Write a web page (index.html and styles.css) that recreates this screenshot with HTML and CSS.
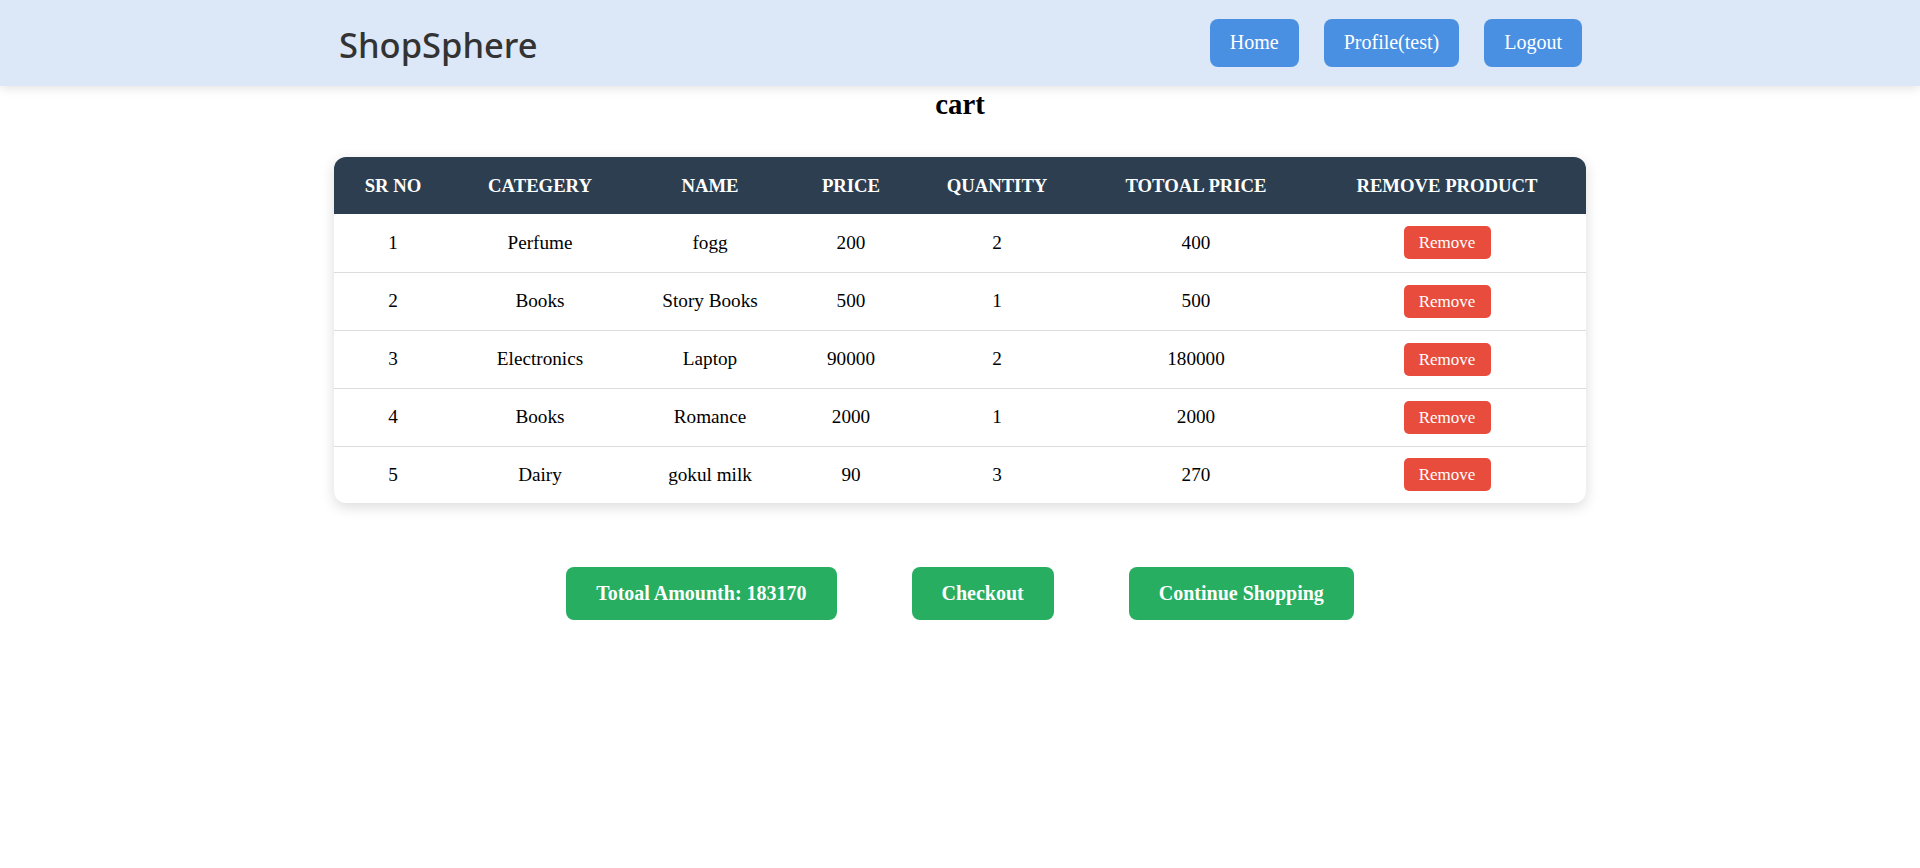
FILE: index.html
```html
<!DOCTYPE html>
<html>
<head>
<meta charset="utf-8">
<title>ShopSphere - Cart</title>
<link rel="stylesheet" href="styles.css">
</head>
<body>
<header class="topbar">
  <div class="topbar-inner">
    <div class="logo">ShopSphere</div>
    <nav class="nav">
      <a class="nav-btn" href="#">Home</a>
      <a class="nav-btn" href="#">Profile(test)</a>
      <a class="nav-btn" href="#">Logout</a>
    </nav>
  </div>
</header>
<main class="page">
  <h2 class="title">cart</h2>
  <div class="table-wrap">
    <table class="cart">
      <colgroup>
        <col class="c1"><col class="c2"><col class="c3"><col class="c4"><col class="c5"><col class="c6"><col class="c7">
      </colgroup>
      <thead>
        <tr><th>Sr No</th><th>Categery</th><th>Name</th><th>Price</th><th>Quantity</th><th>Totoal Price</th><th>Remove Product</th></tr>
      </thead>
      <tbody>
        <tr><td>1</td><td>Perfume</td><td>fogg</td><td>200</td><td>2</td><td>400</td><td><button class="remove">Remove</button></td></tr>
        <tr><td>2</td><td>Books</td><td>Story Books</td><td>500</td><td>1</td><td>500</td><td><button class="remove">Remove</button></td></tr>
        <tr><td>3</td><td>Electronics</td><td>Laptop</td><td>90000</td><td>2</td><td>180000</td><td><button class="remove">Remove</button></td></tr>
        <tr><td>4</td><td>Books</td><td>Romance</td><td>2000</td><td>1</td><td>2000</td><td><button class="remove">Remove</button></td></tr>
        <tr><td>5</td><td>Dairy</td><td>gokul milk</td><td>90</td><td>3</td><td>270</td><td><button class="remove">Remove</button></td></tr>
      </tbody>
    </table>
  </div>
  <div class="actions">
    <button class="green">Totoal Amounth: 183170</button>
    <button class="green">Checkout</button>
    <button class="green">Continue Shopping</button>
  </div>
</main>
</body>
</html>
```
FILE: styles.css
```css
* { box-sizing: border-box; }
html, body { margin: 0; padding: 0; }
body {
  font-family: "Liberation Serif", "Times New Roman", serif;
  background: #ffffff;
  color: #000;
}
.topbar {
  background: #dce8f8;
  height: 86px;
  box-shadow: 0 2px 10px rgba(0, 0, 0, 0.12);
  position: relative;
  z-index: 1;
}
.topbar-inner {
  width: 1252px;
  margin: 0 auto;
  height: 100%;
  display: flex;
  align-items: center;
  justify-content: space-between;
  padding: 0 4px 0 5px;
}
.logo {
  font-family: "Noto Sans", "Open Sans", sans-serif;
  font-size: 34.5px;
  font-weight: 500;
  color: #333333;
  letter-spacing: 0;
  margin-top: 2px;
}
.nav { display: flex; gap: 25px; }
.nav-btn {
  background: #4a90e2;
  color: #ffffff;
  text-decoration: none;
  font-size: 20px;
  padding: 12px 20px 13px;
  border-radius: 8px;
  line-height: 23px;
}
.page { width: 1252px; margin: 0 auto; }
.title {
  text-align: center;
  font-size: 28.8px;
  font-weight: bold;
  margin: 2px 0 36px;
  line-height: 33px;
}
.table-wrap {
  border-radius: 12px;
  overflow: hidden;
  box-shadow: 0 4px 14px rgba(0, 0, 0, 0.14);
  background: #fff;
}
.cart {
  width: 100%;
  border-collapse: collapse;
  table-layout: fixed;
  font-size: 19.2px;
}
.c1 { width: 118px; } .c2 { width: 176px; } .c3 { width: 164px; } .c4 { width: 118px; }
.c5 { width: 174px; } .c6 { width: 224px; } .c7 { width: 278px; }
.cart th {
  background: #2c3e50;
  color: #ffffff;
  text-transform: uppercase;
  font-weight: bold;
  font-size: 18.7px;
  height: 57px;
  padding: 0 4px;
  text-align: center;
  white-space: nowrap;
}
.cart td {
  text-align: center;
  height: 58px;
  padding: 0 4px;
  border-bottom: 1px solid #dddddd;
}
.cart tbody tr:last-child td { border-bottom: none; height: 57px; }
.remove {
  font-family: "Liberation Serif", "Times New Roman", serif;
  background: #e74c3c;
  color: #fff;
  border: none;
  border-radius: 5px;
  font-size: 17px;
  line-height: 19px;
  padding: 7px 15px;
  width: 87px;
  cursor: pointer;
}
.actions {
  display: flex;
  justify-content: center;
  gap: 75px;
  margin-top: 64px;
}
.green {
  font-family: "Liberation Serif", "Times New Roman", serif;
  background: #27ae60;
  color: #fff;
  border: none;
  border-radius: 8px;
  font-size: 20px;
  font-weight: bold;
  line-height: 23px;
  padding: 15px 30px;
  cursor: pointer;
}
```
